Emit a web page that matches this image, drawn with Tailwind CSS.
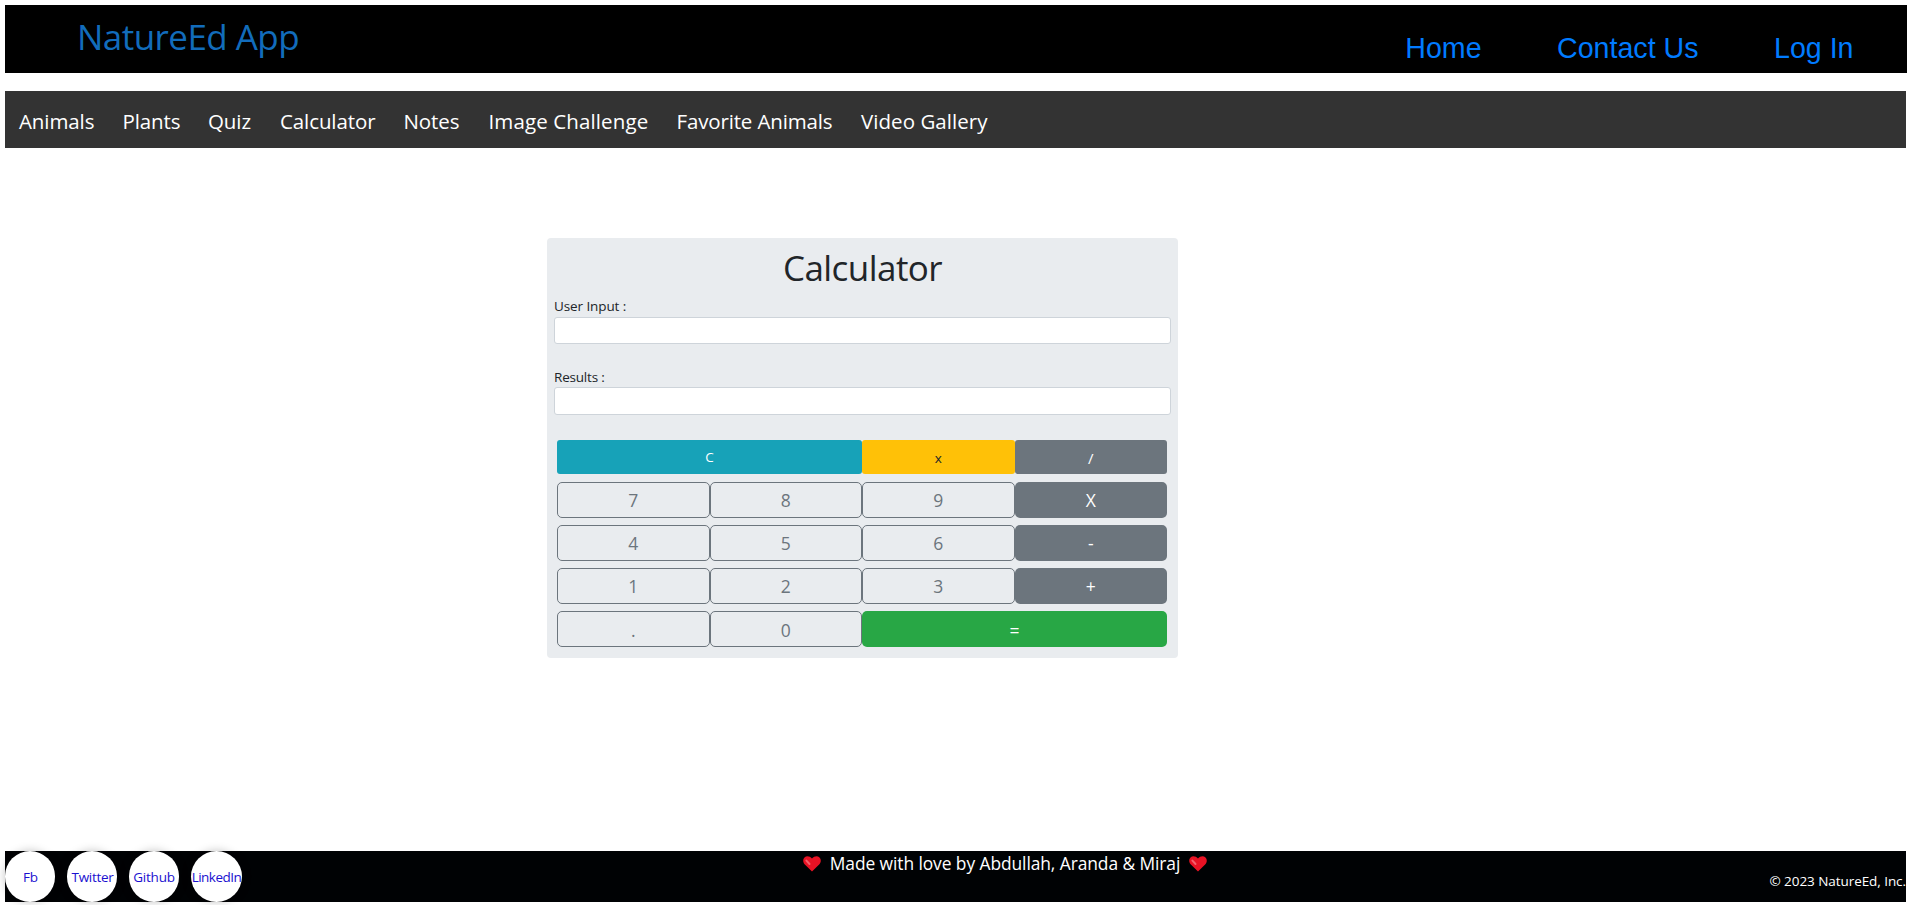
<!DOCTYPE html>
<html lang="en">
<head>
<meta charset="utf-8">
<title>NatureEd App</title>
<script src="https://cdn.jsdelivr.net/npm/@tailwindcss/browser@4"></script>
</head>
<body class="bg-white h-[905px] overflow-hidden pl-[5px] pt-[5px] pr-[6px] flex flex-col font-['Open_Sans','Noto_Sans',sans-serif] text-[#212529]">
  <header class="h-[68px] w-[1902px] shrink-0 bg-black flex justify-between pl-[72px] pr-[53.5px]">
    <h1 class="text-[35px] leading-[64px] tracking-[-0.55px] text-[#126cbb]">NatureEd App</h1>
    <nav class="flex gap-[75.5px] font-['Liberation_Sans',sans-serif] text-[28.6px] leading-[86px] text-[#007bff] whitespace-nowrap">
      <a>Home</a><a>Contact Us</a><a>Log In</a>
    </nav>
  </header>
  <nav class="mt-[18px] h-[57px] w-[1901px] shrink-0 bg-[#333] pl-[14px] flex text-[20.5px] leading-[60px] tracking-[-0.1px] text-white whitespace-nowrap">
    <a class="w-[103.5px]">Animals</a>
    <a class="w-[85.5px]">Plants</a>
    <a class="w-[72px]">Quiz</a>
    <a class="w-[123.5px]">Calculator</a>
    <a class="w-[85px]">Notes</a>
    <a class="w-[188px] tracking-[0.12px]">Image Challenge</a>
    <a class="w-[184.5px] tracking-[-0.15px]">Favorite Animals</a>
    <a class="tracking-[0.05px]">Video Gallery</a>
  </nav>
  <main class="grow">
    <section class="mt-[90px] ml-[542px] w-[631px] h-[420px] bg-[#e9ecef] rounded-[4px] px-[7px]">
      <h2 class="h-[63px] text-center text-[35px] leading-[60px] tracking-[-0.55px]">Calculator</h2>
      <label class="block h-[16px] text-[13.5px] leading-[11px] tracking-[-0.1px]">User Input :</label>
      <input class="block w-full h-[27px] bg-white border border-[#ced4da] rounded-[3px]">
      <label class="block h-[43px] pt-[26px] text-[13.5px] leading-[15px] tracking-[-0.2px]">Results :</label>
      <input class="block w-full h-[28px] bg-white border border-[#ced4da] rounded-[3px]">
      <div class="mt-[25px] ml-[3px] mr-[4px] grid grid-cols-4 text-[13.5px] text-white text-center">
        <button class="col-span-2 h-[34px] bg-[#17a2b8] rounded-[3px] pt-[1px]">C</button>
        <button class="h-[34px] bg-[#ffc107] text-[#212529] rounded-[3px] pt-[2px]">x</button>
        <button class="h-[34px] bg-[#6c757d] rounded-[3px] pt-[2px] text-[15px]">/</button>
      </div>
      <div class="mt-[8px] ml-[3px] mr-[4px] grid grid-cols-4 gap-y-[7px] text-[17.5px] leading-[24px] text-[#6c757d]">
        <button class="h-[36px] border border-[#6c757d] rounded-[5px] pb-[1px]">7</button>
        <button class="h-[36px] border border-[#6c757d] rounded-[5px] pb-[1px]">8</button>
        <button class="h-[36px] border border-[#6c757d] rounded-[5px] pb-[1px]">9</button>
        <button class="h-[36px] bg-[#6c757d] text-white rounded-[5px] pb-[1px]">X</button>
        <button class="h-[36px] border border-[#6c757d] rounded-[5px] pb-[1px]">4</button>
        <button class="h-[36px] border border-[#6c757d] rounded-[5px] pb-[1px]">5</button>
        <button class="h-[36px] border border-[#6c757d] rounded-[5px] pb-[1px]">6</button>
        <button class="h-[36px] bg-[#6c757d] text-white rounded-[5px] pb-[1px]">-</button>
        <button class="h-[36px] border border-[#6c757d] rounded-[5px] pb-[1px]">1</button>
        <button class="h-[36px] border border-[#6c757d] rounded-[5px] pb-[1px]">2</button>
        <button class="h-[36px] border border-[#6c757d] rounded-[5px] pb-[1px]">3</button>
        <button class="h-[36px] bg-[#6c757d] text-white rounded-[5px] pb-[1px]">+</button>
        <button class="h-[36px] border border-[#6c757d] rounded-[5px] pt-[1px]">.</button>
        <button class="h-[36px] border border-[#6c757d] rounded-[5px] pt-[1px]">0</button>
        <button class="col-span-2 h-[36px] bg-[#28a745] text-white rounded-[5px] pt-[1px]">=</button>
      </div>
    </section>
  </main>
  <footer class="h-[51px] w-[1901px] mb-[3px] shrink-0 bg-[#000204] flex text-white whitespace-nowrap">
    <div class="w-[798px] flex gap-[12px] text-[13.5px] leading-[52px] text-[#1a10d0]">
      <a class="w-[50px] h-[51px] rounded-full bg-white flex justify-center pl-px shadow-[0_0_10px_rgba(0,0,0,0.25)]">Fb</a>
      <a class="w-[50px] h-[51px] rounded-full bg-white flex justify-center pl-px tracking-[-0.3px] shadow-[0_0_10px_rgba(0,0,0,0.25)]">Twitter</a>
      <a class="w-[50px] h-[51px] rounded-full bg-white flex justify-center tracking-[-0.2px] shadow-[0_0_10px_rgba(0,0,0,0.25)]">Github</a>
      <a class="w-[51px] h-[51px] rounded-full bg-white flex justify-center shadow-[0_0_10px_rgba(0,0,0,0.25)] tracking-[-0.5px]">LinkedIn</a>
    </div>
    <div class="w-[404px] flex justify-between text-[17.4px] leading-[25px] tracking-[-0.08px]">
      <svg class="mt-[5px] w-[18px] h-[16px]" viewBox="0 0 18 16"><path d="M9 15.6L1.6 8.2C-.2 6.2-.2 3.2 1.5 1.5C3.4-.3 6.6-.2 9 2.5C11.4-.2 14.6-.3 16.5 1.5C18.2 3.2 18.2 6.2 16.4 8.2Z" fill="#e81224"/><path d="M3.4 4.6L6.5 8" stroke="#f4606c" stroke-width="2" stroke-linecap="round"/></svg>
      <span>Made with love by Abdullah, Aranda &amp; Miraj</span>
      <svg class="mt-[5px] w-[18px] h-[16px]" viewBox="0 0 18 16"><path d="M9 15.6L1.6 8.2C-.2 6.2-.2 3.2 1.5 1.5C3.4-.3 6.6-.2 9 2.5C11.4-.2 14.6-.3 16.5 1.5C18.2 3.2 18.2 6.2 16.4 8.2Z" fill="#e81224"/><path d="M3.4 4.6L6.5 8" stroke="#f4606c" stroke-width="2" stroke-linecap="round"/></svg>
    </div>
    <p class="ml-auto text-[13.5px] leading-[60px] tracking-[-0.06px]">© 2023 NatureEd, Inc.</p>
  </footer>
</body>
</html>
